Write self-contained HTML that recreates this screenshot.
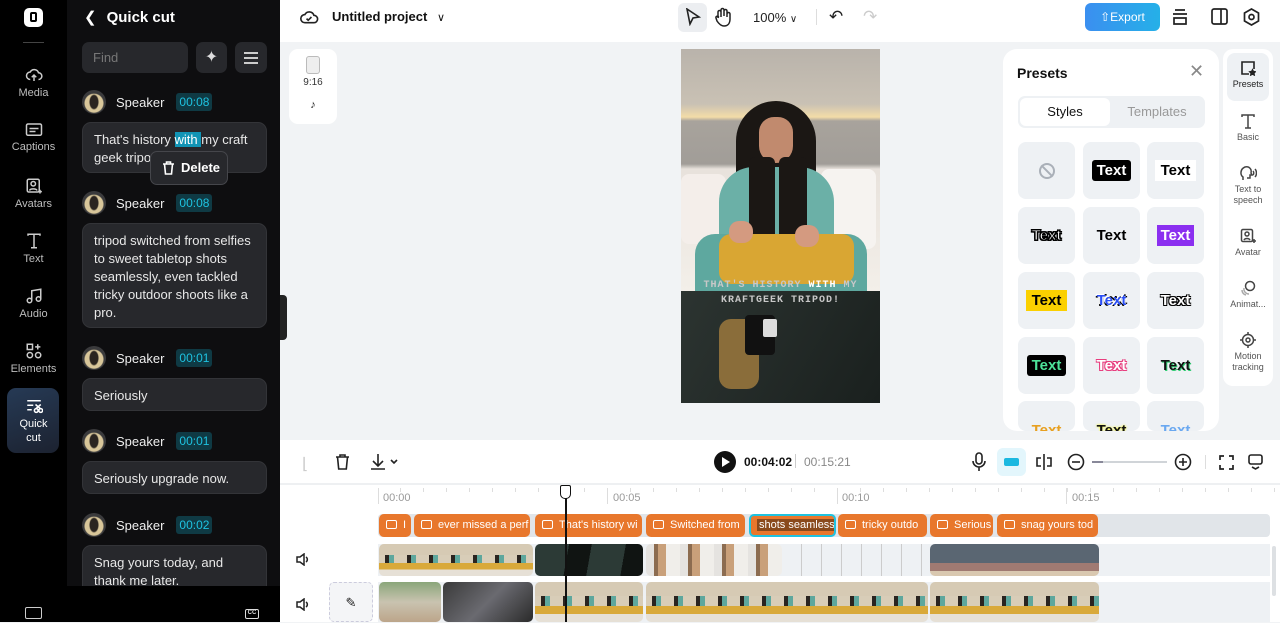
<!DOCTYPE html>
<html><head><meta charset="utf-8">
<style>
*{box-sizing:border-box;margin:0;padding:0}
body{width:1280px;height:622px;overflow:hidden;font-family:"Liberation Sans",sans-serif;background:#f1f3f5;position:relative}
.a{position:absolute}
.rail{left:0;top:0;width:67px;height:622px;background:#000}
.ri{position:absolute;left:0;width:67px;text-align:center;color:#bdbdbd;font-size:11px}
.ri svg{display:block;margin:0 auto 3px}
.panel{left:67px;top:0;width:213px;height:622px;background:#0e0e10}
.card{position:absolute;left:82px;width:185px;background:#27282c;border:1px solid #333438;border-radius:9px;color:#e8e8e8;font-size:13px;line-height:18px;padding:8px 11px}
.spk{position:absolute;left:82px;height:24px;display:flex;align-items:center;color:#eee;font-size:13px}
.av{width:24px;height:24px;border-radius:50%;background:radial-gradient(ellipse 5px 8px at 50% 50%,#2a2420 0 4px,transparent 5px),radial-gradient(circle at 50% 55%,#d8c69a 0 9px,#3a3a3c 10px);margin-right:10px}
.tm{margin-left:12px;background:#0f3a44;color:#1ec2e0;font-size:12px;padding:2px 3px;border-radius:3px}
.top{left:280px;top:0;width:1000px;height:42px;background:#fff}
.tl{left:280px;top:440px;width:1000px;height:182px;background:#fff}
.cap{position:absolute;top:514px;height:23px;background:#e8772c;border-radius:5px;color:#fff;font-size:11px;line-height:23px;padding-left:7px;white-space:nowrap;overflow:hidden}
.cap i{display:inline-block;width:11px;height:9px;border:1.5px solid #fff;border-radius:2px;margin-right:6px;vertical-align:-1px}
.strip{position:absolute;border-radius:5px;overflow:hidden}
.g2{background:linear-gradient(180deg,#d6cab4 0 35%,transparent 35% 60%,#d9a93a 60% 80%,#e6e0d6 80%),repeating-linear-gradient(90deg,#d8cdb8 0 6px,#2a2420 6px 10px,#5ea79d 10px 15px,#d8cdb8 15px 22px)}
.tile{position:absolute;width:57px;height:57px;background:#eef1f4;border-radius:8px;display:flex;align-items:center;justify-content:center;font-weight:bold;font-size:15px}
.ti{position:absolute;left:1226px;width:44px;text-align:center;font-size:9px;color:#555;line-height:11px}
.ti svg{display:block;margin:0 auto 3px}
</style></head><body>
<div class="a rail"></div>
<div class="a" style="left:24px;top:8px;width:19px;height:19px;background:#fff;border-radius:5px"><div style="position:absolute;left:6px;top:4px;width:7px;height:10px;border:2px solid #000;border-radius:2px"></div></div>
<div class="a" style="left:23px;top:42px;width:21px;height:1px;background:#444"></div>
<div class="ri" style="top:66px"><svg width="18" height="18" viewBox="0 0 24 24" fill="none" stroke="#ccc" stroke-width="2"><path d="M7 18a5 5 0 0 1 0-10 6 6 0 0 1 11 1 4 4 0 0 1 0 9"/><path d="M12 20v-8m-3 3 3-3 3 3"/></svg>Media</div>
<div class="ri" style="top:122px"><svg width="18" height="16" viewBox="0 0 24 20" fill="none" stroke="#ccc" stroke-width="2"><rect x="2" y="2" width="20" height="15" rx="2"/><path d="M6 8h12M6 12h8"/></svg>Captions</div>
<div class="ri" style="top:177px"><svg width="18" height="18" viewBox="0 0 24 24" fill="none" stroke="#ccc" stroke-width="2"><rect x="3" y="3" width="16" height="17" rx="2"/><circle cx="11" cy="9" r="3"/><path d="M6 18c1-3 9-3 10 0M20 17v5M17.5 19.5h5"/></svg>Avatars</div>
<div class="ri" style="top:232px"><svg width="18" height="18" viewBox="0 0 24 24" fill="none" stroke="#ccc" stroke-width="2"><path d="M4 5V3h16v2M12 3v18M8 21h8"/></svg>Text</div>
<div class="ri" style="top:287px"><svg width="18" height="18" viewBox="0 0 24 24" fill="none" stroke="#ccc" stroke-width="2"><circle cx="6" cy="18" r="3"/><circle cx="18" cy="16" r="3"/><path d="M9 18V5l12-2v13"/></svg>Audio</div>
<div class="ri" style="top:342px"><svg width="18" height="18" viewBox="0 0 24 24" fill="none" stroke="#ccc" stroke-width="2"><rect x="3" y="3" width="7" height="7"/><path d="M17 3v7M13.5 6.5h7"/><circle cx="6.5" cy="17.5" r="3.5"/><circle cx="17.5" cy="17.5" r="3.5"/></svg>Elements</div>
<div class="a" style="left:7px;top:388px;width:52px;height:65px;border-radius:9px;background:linear-gradient(160deg,#263a55,#1c2230)"></div>
<div class="ri" style="top:398px;color:#fff;line-height:14px"><svg width="18" height="16" viewBox="0 0 24 20" fill="none" stroke="#fff" stroke-width="2"><path d="M3 3h18M3 9h8M3 15h6"/><circle cx="15" cy="16" r="2.5"/><circle cx="21" cy="16" r="2.5"/><path d="M14 8l7 6M21 8l-7 6"/></svg>Quick<br>cut</div>
<div class="a" style="left:25px;top:607px;width:17px;height:12px;border:1.5px solid #ccc;border-radius:2px"></div>

<div class="a panel"></div>
<div class="a" style="left:84px;top:8px;color:#fff;font-size:15px;font-weight:bold"><span style="font-weight:normal;margin-right:10px">&#10094;</span>Quick cut</div>
<div class="a" style="left:82px;top:42px;width:106px;height:31px;background:#27282c;border-radius:7px;color:#777;font-size:13px;line-height:31px;padding-left:11px">Find</div>
<div class="a" style="left:196px;top:42px;width:31px;height:31px;background:#27282c;border-radius:7px;color:#ddd;text-align:center;line-height:31px;font-size:16px">&#10022;</div>
<div class="a" style="left:235px;top:42px;width:32px;height:31px;background:#27282c;border-radius:7px"><div style="position:absolute;left:9px;top:10px;width:14px;height:2px;background:#ccc;box-shadow:0 5px 0 #ccc,0 10px 0 #ccc"></div></div>

<div class="spk" style="top:90px"><span class="av"></span>Speaker<span class="tm">00:08</span></div>
<div class="card" style="top:122px;height:51px">That's history <span style="background:#1194b5;color:#fff">with </span>my craft geek tripod</div>
<div class="a" style="left:150px;top:151px;width:78px;height:34px;background:#27282c;border:1px solid #45464b;border-radius:7px;color:#fff;font-size:13px;font-weight:bold;line-height:32px;padding-left:30px"><svg class="a" style="left:11px;top:9px" width="13" height="14" viewBox="0 0 13 14" fill="none" stroke="#fff" stroke-width="1.6"><path d="M1 3h11M4.5 3V1h4v2M2.5 3l1 10h6l1-10"/></svg>Delete</div>
<div class="spk" style="top:191px"><span class="av"></span>Speaker<span class="tm">00:08</span></div>
<div class="card" style="top:223px;height:105px">tripod switched from selfies to sweet tabletop shots seamlessly, even tackled tricky outdoor shoots like a pro.</div>
<div class="spk" style="top:346px"><span class="av"></span>Speaker<span class="tm">00:01</span></div>
<div class="card" style="top:378px;height:33px">Seriously</div>
<div class="spk" style="top:429px"><span class="av"></span>Speaker<span class="tm">00:01</span></div>
<div class="card" style="top:461px;height:33px">Seriously upgrade now.</div>
<div class="spk" style="top:513px"><span class="av"></span>Speaker<span class="tm">00:02</span></div>
<div class="card" style="top:545px;height:45px;border-bottom:none;border-radius:9px 9px 0 0">Snag yours today, and thank me later.</div>
<div class="a" style="left:67px;top:586px;width:213px;height:36px;background:#000"></div>
<div class="a" style="left:245px;top:609px;width:14px;height:10px;border:1.5px solid #ddd;border-radius:2px;font-size:6px;color:#ddd;line-height:7px;text-align:center;font-weight:bold">CC</div>
<div class="a" style="left:280px;top:295px;width:7px;height:45px;background:#222;border-radius:0 4px 4px 0"></div>

<div class="a top"></div>
<svg class="a" style="left:299px;top:8px" width="20" height="18" viewBox="0 0 24 22" fill="none" stroke="#222" stroke-width="2"><path d="M7 18a5 5 0 0 1 0-10 6 6 0 0 1 11 1 4 4 0 0 1 0 9z"/><path d="M9 13l2 2 4-4"/></svg>
<div class="a" style="left:332px;top:9px;font-size:13px;font-weight:bold;color:#111">Untitled project <span style="font-weight:normal;margin-left:6px;font-size:11px">&#8744;</span></div>
<div class="a" style="left:678px;top:3px;width:29px;height:29px;background:#eceef1;border-radius:6px"></div>
<svg class="a" style="left:685px;top:8px" width="16" height="18" viewBox="0 0 16 18" fill="none" stroke="#222" stroke-width="1.6"><path d="M2 1l12 8-6 1-3 6z"/></svg>
<svg class="a" style="left:714px;top:7px" width="18" height="20" viewBox="0 0 18 20" fill="none" stroke="#222" stroke-width="1.5"><path d="M4 11V5a1.5 1.5 0 0 1 3 0v5M7 9V3a1.5 1.5 0 0 1 3 0v6M10 9V4a1.5 1.5 0 0 1 3 0v6M13 10V7a1.5 1.5 0 0 1 3 0v5c0 4-2 7-6 7-3 0-5-2-7-5l-1-3a1.4 1.4 0 0 1 2.5-1.2L4 11"/></svg>
<div class="a" style="left:753px;top:10px;font-size:13px;color:#222">100% <span style="font-size:10px">&#8744;</span></div>
<div class="a" style="left:816px;top:9px;width:1px;height:16px;background:#ddd"></div>
<div class="a" style="left:829px;top:7px;font-size:17px;color:#222">&#8630;</div>
<div class="a" style="left:863px;top:7px;font-size:17px;color:#ccc">&#8631;</div>
<div class="a" style="left:1085px;top:3px;width:75px;height:28px;border-radius:6px;background:linear-gradient(90deg,#3b8ff0,#25b0e8);color:#fff;font-size:12px;line-height:28px;text-align:center">&#8679;Export</div>
<svg class="a" style="left:1171px;top:8px" width="18" height="18" viewBox="0 0 18 18" fill="none" stroke="#222" stroke-width="1.7"><path d="M4 2h10M2 6h14M3 10h12v6H3z"/></svg>
<svg class="a" style="left:1211px;top:8px" width="17" height="17" viewBox="0 0 17 17" fill="none" stroke="#222" stroke-width="1.7"><rect x="1" y="1" width="15" height="15" rx="2"/><path d="M10 1v15"/></svg>
<svg class="a" style="left:1243px;top:8px" width="17" height="18" viewBox="0 0 17 18" fill="none" stroke="#222" stroke-width="1.7"><path d="M8.5 1l7 4v8l-7 4-7-4V5z"/><circle cx="8.5" cy="9" r="2.5"/></svg>

<div class="a" style="left:289px;top:49px;width:48px;height:75px;background:#fff;border-radius:9px"></div>
<div class="a" style="left:306px;top:56px;width:14px;height:18px;border:1.5px solid #bbb;background:#eee;border-radius:3px"></div>
<div class="a" style="left:289px;top:77px;width:48px;text-align:center;font-size:10px;color:#333">9:16</div>
<div class="a" style="left:289px;top:99px;width:48px;text-align:center;font-size:11px;color:#222">&#9834;</div>

<!-- video -->
<div class="a" style="left:681px;top:49px;width:199px;height:354px;overflow:hidden;background:#1d2321">
 <div class="a" style="left:0;top:0;width:199px;height:242px;background:linear-gradient(180deg,#b9b3ab 0,#c9c1b4 55px,#f3dca8 68px,#a8a39c 72px,#a19d98 115px,#e8e2dc 120px,#f3efe9 242px)"></div>
 <div class="a" style="left:0;top:125px;width:45px;height:70px;background:#f4eeea;border-radius:8px"></div>
 <div class="a" style="left:140px;top:120px;width:55px;height:80px;background:#f6f3f0;border-radius:8px"></div>
 <div class="a" style="left:55px;top:52px;width:80px;height:130px;background:#1b1714;border-radius:40px 40px 20px 20px"></div>
 <div class="a" style="left:78px;top:68px;width:34px;height:46px;background:#c18a6e;border-radius:16px 16px 18px 18px"></div>
 <div class="a" style="left:38px;top:118px;width:115px;height:120px;background:#6bb0a7;border-radius:35px 35px 10px 10px"></div>
 <div class="a" style="left:68px;top:108px;width:26px;height:85px;background:#1b1714;border-radius:6px"></div>
 <div class="a" style="left:98px;top:108px;width:28px;height:90px;background:#1b1714;border-radius:6px"></div>
 <div class="a" style="left:14px;top:185px;width:172px;height:57px;background:#5ea89f;border-radius:20px 20px 0 0"></div>
 <div class="a" style="left:38px;top:185px;width:135px;height:50px;background:#d9a633;border-radius:12px"></div>
 <div class="a" style="left:48px;top:172px;width:24px;height:22px;background:#d49a80;border-radius:10px"></div>
 <div class="a" style="left:114px;top:176px;width:24px;height:22px;background:#d49a80;border-radius:10px"></div>
 <div class="a" style="left:0;top:242px;width:199px;height:112px;background:linear-gradient(120deg,#2c3431,#1a201e)"></div>
 <div class="a" style="left:38px;top:270px;width:40px;height:70px;background:#8a6d3a;border-radius:12px"></div>
 <div class="a" style="left:64px;top:266px;width:30px;height:40px;background:#111;border-radius:4px"></div>
 <div class="a" style="left:82px;top:270px;width:14px;height:18px;background:#ddd;border-radius:2px"></div>
 <div class="a" style="left:0;top:229px;width:199px;text-align:center;color:#c8c8c8;font-size:10px;font-weight:bold;letter-spacing:1px;line-height:15px;font-family:'Liberation Mono',monospace">THAT'S HISTORY <span style="color:#fff">WITH</span> MY<br>KRAFTGEEK TRIPOD!</div>
</div>

<!-- presets -->
<div class="a" style="left:1003px;top:49px;width:216px;height:382px;background:#fff;border-radius:14px;overflow:hidden">
 <div class="a" style="left:14px;top:16px;font-size:14px;font-weight:bold;color:#111">Presets</div>
 <div class="a" style="left:186px;top:12px;font-size:18px;color:#888">&#10005;</div>
 <div class="a" style="left:15px;top:47px;width:187px;height:32px;background:#eef1f4;border-radius:7px"></div>
 <div class="a" style="left:17px;top:49px;width:90px;height:28px;background:#fff;border-radius:6px;text-align:center;line-height:28px;font-size:13px;color:#111">Styles</div>
 <div class="a" style="left:108px;top:49px;width:92px;height:28px;text-align:center;line-height:28px;font-size:13px;color:#999">Templates</div>
</div>
<div class="tile" style="left:1018px;top:142px"><div style="width:16px;height:16px;border:2px solid #aab0b8;border-radius:50%;position:relative"><div style="position:absolute;left:5px;top:-2px;width:2px;height:16px;background:#aab0b8;transform:rotate(-45deg)"></div></div></div>
<div class="tile" style="left:1083px;top:142px"><span style="background:#000;color:#fff;padding:2px 5px;border-radius:3px">Text</span></div>
<div class="tile" style="left:1147px;top:142px"><span style="background:#fff;color:#000;padding:2px 6px">Text</span></div>
<div class="tile" style="left:1018px;top:207px"><span style="color:#fff;-webkit-text-stroke:1px #000;text-shadow:1px 1px 0 #000,-1px -1px 0 #000,1px -1px 0 #000,-1px 1px 0 #000">Text</span></div>
<div class="tile" style="left:1083px;top:207px"><span style="color:#000">Text</span></div>
<div class="tile" style="left:1147px;top:207px"><span style="background:#8b2ff0;color:#fff;padding:2px 4px">Text</span></div>
<div class="tile" style="left:1018px;top:272px"><span style="background:#fbd000;color:#000;padding:2px 6px">Text</span></div>
<div class="tile" style="left:1083px;top:272px"><span style="color:#2a4ef5;text-shadow:1px 1px 0 #fff,-1px -1px 0 #fff,1px -1px 0 #000,-1px 1px 0 #000">Text</span></div>
<div class="tile" style="left:1147px;top:272px"><span style="color:#fff;text-shadow:1px 1px 0 #000,-1px -1px 0 #000,1px -1px 0 #000,-1px 1px 0 #000">Text</span></div>
<div class="tile" style="left:1018px;top:337px"><span style="background:#000;color:#4de39a;padding:2px 5px;border-radius:3px">Text</span></div>
<div class="tile" style="left:1083px;top:337px"><span style="color:#fff;text-shadow:1px 1px 0 #e83d7e,-1px -1px 0 #e83d7e,1px -1px 0 #e83d7e,-1px 1px 0 #e83d7e">Text</span></div>
<div class="tile" style="left:1147px;top:337px"><span style="color:#111;text-shadow:1px 1px 0 #2ecc71">Text</span></div>
<div class="tile" style="left:1018px;top:401px;height:30px;align-items:flex-end;overflow:hidden"><span style="color:#e8a020;margin-bottom:-8px">Text</span></div>
<div class="tile" style="left:1083px;top:401px;height:30px;align-items:flex-end;overflow:hidden"><span style="color:#111;margin-bottom:-8px;text-shadow:0 0 2px #ff0">Text</span></div>
<div class="tile" style="left:1147px;top:401px;height:30px;align-items:flex-end;overflow:hidden"><span style="color:#6aa8f0;margin-bottom:-8px">Text</span></div>

<div class="a" style="left:1223px;top:49px;width:50px;height:337px;background:#fff;border-radius:10px"></div>
<div class="a" style="left:1227px;top:53px;width:42px;height:48px;background:#eef1f4;border-radius:8px"></div>
<div class="ti" style="top:60px;color:#222"><svg width="16" height="16" viewBox="0 0 16 16" fill="none" stroke="#222" stroke-width="1.6"><path d="M9 14H2V2h12v7"/><path d="M12.5 10l.8 1.6 1.7.3-1.2 1.2.3 1.7-1.6-.8-1.6.8.3-1.7L10 11.9l1.7-.3z" fill="#222"/></svg>Presets</div>
<div class="ti" style="top:113px"><svg width="16" height="16" viewBox="0 0 16 16" fill="none" stroke="#444" stroke-width="1.5"><path d="M2 4V2h12v2M8 2v13M5 15h6"/></svg>Basic</div>
<div class="ti" style="top:165px"><svg width="18" height="16" viewBox="0 0 18 16" fill="none" stroke="#444" stroke-width="1.5"><path d="M4 15v-3C1 10 1 4 6 2c4-1 7 2 6 6l1 2h-2v3H8"/><path d="M14 6c1 1 1 3 0 4M16 4c2 2 2 6 0 8"/></svg>Text to<br>speech</div>
<div class="ti" style="top:228px"><svg width="16" height="16" viewBox="0 0 16 16" fill="none" stroke="#444" stroke-width="1.5"><rect x="1.5" y="1.5" width="11" height="12" rx="1.5"/><circle cx="7" cy="6" r="2"/><path d="M4 12c1-2 5-2 6 0M14 11v4M12 13h4"/></svg>Avatar</div>
<div class="ti" style="top:280px"><svg width="16" height="16" viewBox="0 0 16 16" fill="none" stroke="#444" stroke-width="1.5"><circle cx="10" cy="6" r="4.5"/><path d="M4 8a5 5 0 0 0 5 6M2 10a5 5 0 0 0 4 5" stroke="#aaa"/></svg>Animat...</div>
<div class="ti" style="top:332px"><svg width="16" height="16" viewBox="0 0 16 16" fill="none" stroke="#444" stroke-width="1.5"><circle cx="8" cy="8" r="5.5"/><circle cx="8" cy="8" r="2"/><path d="M8 0v2.5M8 13.5V16M0 8h2.5M13.5 8H16"/></svg>Motion<br>tracking</div>

<!-- timeline -->
<div class="a tl"></div>
<div class="a" style="left:280px;top:483px;width:1000px;height:2px;background:#eef0f2"></div>
<div class="a" style="left:302px;top:454px;font-size:16px;color:#ccc">&#8970;</div>
<svg class="a" style="left:335px;top:454px" width="15" height="16" viewBox="0 0 15 16" fill="none" stroke="#222" stroke-width="1.6"><path d="M1 3h13M5 3V1h5v2M2.5 3l1.2 12h7.6L12.5 3"/></svg>
<svg class="a" style="left:370px;top:453px" width="28" height="18" viewBox="0 0 28 18" fill="none" stroke="#222" stroke-width="1.6"><path d="M8 1v11M3 8l5 5 5-5M1 16h14M21 7l3 3 3-3"/></svg>
<div class="a" style="left:714px;top:451px;width:22px;height:22px;border-radius:50%;background:#111"><div style="position:absolute;left:8px;top:6px;border-left:8px solid #fff;border-top:5px solid transparent;border-bottom:5px solid transparent"></div></div>
<div class="a" style="left:744px;top:455px;font-size:12px;font-weight:bold;color:#111">00:04:02</div>
<div class="a" style="left:795px;top:454px;width:1px;height:14px;background:#ccc"></div>
<div class="a" style="left:804px;top:455px;font-size:12px;color:#888">00:15:21</div>
<svg class="a" style="left:972px;top:452px" width="14" height="20" viewBox="0 0 14 20" fill="none" stroke="#222" stroke-width="1.6"><rect x="4" y="1" width="6" height="11" rx="3"/><path d="M1 9a6 6 0 0 0 12 0M7 15v4"/></svg>
<div class="a" style="left:997px;top:448px;width:29px;height:28px;background:#e3f6fc;border-radius:6px"><div style="position:absolute;left:7px;top:10px;width:15px;height:8px;background:#1bb8e0;border-radius:2px"></div></div>
<svg class="a" style="left:1035px;top:453px" width="18" height="18" viewBox="0 0 18 18" fill="none" stroke="#222" stroke-width="1.6"><path d="M9 1v16M6 5H2v8h4M12 5h4v8h-4"/></svg>
<svg class="a" style="left:1067px;top:453px" width="18" height="18" viewBox="0 0 18 18" fill="none" stroke="#222" stroke-width="1.6"><circle cx="9" cy="9" r="7.5"/><path d="M5 9h8"/></svg>
<div class="a" style="left:1092px;top:461px;width:75px;height:2px;background:#d0d4d8"><div style="width:11px;height:2px;background:#889"></div></div>
<svg class="a" style="left:1174px;top:453px" width="18" height="18" viewBox="0 0 18 18" fill="none" stroke="#222" stroke-width="1.6"><circle cx="9" cy="9" r="7.5"/><path d="M5 9h8M9 5v8"/></svg>
<div class="a" style="left:1205px;top:455px;width:1px;height:14px;background:#ddd"></div>
<svg class="a" style="left:1219px;top:455px" width="15" height="15" viewBox="0 0 15 15" fill="none" stroke="#222" stroke-width="1.7"><path d="M1 5V1h4M10 1h4v4M14 10v4h-4M5 14H1v-4"/></svg>
<svg class="a" style="left:1248px;top:454px" width="15" height="16" viewBox="0 0 15 16" fill="none" stroke="#222" stroke-width="1.6"><rect x="1" y="1" width="13" height="9" rx="2"/><path d="M4 13l3.5 2 3.5-2"/></svg>

<!-- ruler -->
<div class="a" style="left:378px;top:488px;width:1px;height:16px;background:#ddd"></div>
<div class="a" style="left:383px;top:492px;font-size:11px;color:#999">00:00</div>
<div class="a" style="left:607px;top:488px;width:1px;height:16px;background:#ddd"></div>
<div class="a" style="left:613px;top:492px;font-size:11px;color:#999">00:05</div>
<div class="a" style="left:837px;top:488px;width:1px;height:16px;background:#ddd"></div>
<div class="a" style="left:842px;top:492px;font-size:11px;color:#999">00:10</div>
<div class="a" style="left:1066px;top:488px;width:1px;height:16px;background:#ddd"></div>
<div class="a" style="left:1072px;top:492px;font-size:11px;color:#999">00:15</div>
<div class="a" style="left:378px;top:488px;width:900px;height:4px;background:repeating-linear-gradient(90deg,transparent 0 22px,#ddd 22px 23px)"></div>

<!-- tracks -->
<div class="a" style="left:378px;top:514px;width:892px;height:23px;background:#e1e5e9;border-radius:4px"></div>
<div class="cap" style="left:379px;width:32px"><i></i>I</div>
<div class="cap" style="left:414px;width:116px"><i></i>ever missed a perf</div>
<div class="cap" style="left:535px;width:107px"><i></i>That's history wi</div>
<div class="cap" style="left:646px;width:99px"><i></i>Switched from</div>
<div class="cap" style="left:749px;width:87px;border:2px solid #1ec2e0;padding-left:6px;line-height:19px"><span style="background:#8a4a1c;padding:0 2px">shots seamless</span></div>
<div class="cap" style="left:838px;width:89px"><i></i>tricky outdo</div>
<div class="cap" style="left:930px;width:63px"><i></i>Serious</div>
<div class="cap" style="left:997px;width:101px"><i></i>snag yours tod</div>

<svg class="a" style="left:296px;top:553px" width="13" height="13" viewBox="0 0 13 13" fill="none" stroke="#222" stroke-width="1.5"><path d="M1 4h3l4-3v11L4 9H1zM10 4a3 3 0 0 1 0 5"/></svg>
<div class="a" style="left:378px;top:544px;width:892px;height:32px;background:#eef1f4"></div>
<div class="strip g2" style="left:379px;top:544px;width:154px;height:32px"></div>
<div class="strip" style="left:535px;top:544px;width:108px;height:32px;background:linear-gradient(100deg,#2c3a36 0 30%,#101412 30% 50%,#2c3a36 50% 80%,#101412 80%)"></div>
<div class="strip" style="left:646px;top:544px;width:136px;height:32px;background:repeating-linear-gradient(90deg,#e5e3e0 0 8px,#8c6c50 8px 12px,#c9a07a 12px 20px,#f0eeea 20px 34px)"></div>
<div class="a" style="left:782px;top:544px;width:148px;height:32px;background:repeating-linear-gradient(90deg,transparent 0 19px,#ccc 19px 20px)"></div>
<div class="strip" style="left:930px;top:544px;width:169px;height:32px;background:linear-gradient(180deg,#5a6672 0 60%,#a07a72 60% 85%,#d9c8b0 85%),#556"></div>
<div class="a" style="left:1272px;top:546px;width:4px;height:50px;background:#dde0e3;border-radius:2px"></div>

<svg class="a" style="left:296px;top:598px" width="13" height="13" viewBox="0 0 13 13" fill="none" stroke="#222" stroke-width="1.5"><path d="M1 4h3l4-3v11L4 9H1zM10 4a3 3 0 0 1 0 5"/></svg>
<div class="a" style="left:329px;top:582px;width:44px;height:40px;border:1px dashed #ccd;border-radius:5px;background:#f4f5f7;text-align:center;line-height:40px;font-size:13px;color:#222">&#9998;</div>
<div class="a" style="left:378px;top:582px;width:892px;height:40px;background:#eef1f4"></div>
<div class="strip" style="left:379px;top:582px;width:62px;height:40px;background:linear-gradient(180deg,#8aa67a 0,#c9c3b0 50%,#bca58a 100%)"></div>
<div class="strip" style="left:443px;top:582px;width:90px;height:40px;background:linear-gradient(135deg,#3a3a3a,#6a6a70 50%,#2a2a2a)"></div>
<div class="strip g2" style="left:535px;top:582px;width:108px;height:40px"></div>
<div class="strip g2" style="left:646px;top:582px;width:282px;height:40px"></div>
<div class="strip g2" style="left:930px;top:582px;width:169px;height:40px"></div>

<!-- playhead -->
<div class="a" style="left:565px;top:496px;width:1.5px;height:126px;background:#111"></div>
<div class="a" style="left:560px;top:485px;width:11px;height:14px;border:1.5px solid #111;background:#fff;border-radius:2px 2px 5px 5px"></div>
</body></html>
